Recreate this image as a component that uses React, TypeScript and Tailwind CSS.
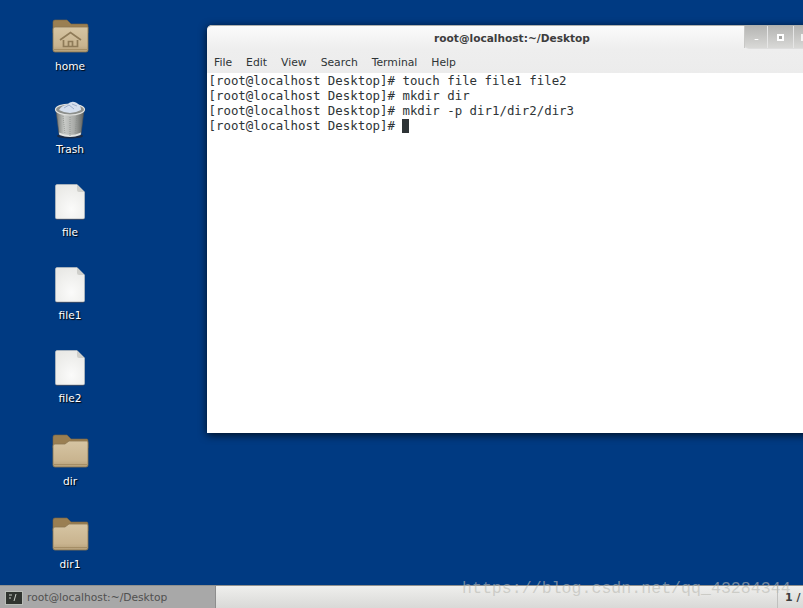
import { Minus } from "lucide-react";

function FolderIcon({ home }: { home?: boolean }) {
  return (
    <svg width="37" height="34" viewBox="0 0 37 34" className="block">
      <defs>
        <linearGradient id={home ? "fh" : "fd"} x1="0" y1="0" x2="0" y2="1">
          <stop offset="0" stopColor="#d6c5a3" />
          <stop offset="0.75" stopColor="#c9b48f" />
          <stop offset="1" stopColor="#b59f78" />
        </linearGradient>
      </defs>
      <path d="M1 3 Q1 1 3 1 H15 L19 5 H35 Q36 5 36 7 V14 H1 Z" fill="#9a7f52" stroke="#7e6740" strokeWidth="0.6" />
      <path
        d={home ? "M1 10 Q1 8 3 8 H36 V31 Q36 33 34 33 H3 Q1 33 1 31 Z" : "M1 12 Q1 10 3 10 H13 L17 7 H35 Q36 7 36 9 V31 Q36 33 34 33 H3 Q1 33 1 31 Z"}
        fill={`url(#${home ? "fh" : "fd"})`}
        stroke="#8b7650"
        strokeWidth="0.8"
      />
      <path d="M2 30.5 H35" stroke="#a58e66" strokeWidth="1.2" />
      {home && (
        <g fill="none" stroke="#8f7b58" strokeWidth="1.7">
          <path d="M8 21 L18.5 13.5 L29 21" />
          <path d="M11.5 21 V27.5 H25.5 V21" />
          <path d="M16.5 27.5 V22.5 H20.5 V27.5" />
        </g>
      )}
    </svg>
  );
}

function TrashIcon() {
  return (
    <svg width="34" height="40" viewBox="0 0 34 40" className="block">
      <defs>
        <linearGradient id="tb" x1="0" y1="0" x2="1" y2="0">
          <stop offset="0" stopColor="#70736f" />
          <stop offset="0.3" stopColor="#c9cbc8" />
          <stop offset="0.65" stopColor="#a9aba8" />
          <stop offset="1" stopColor="#5e615e" />
        </linearGradient>
      </defs>
      <ellipse cx="17" cy="37" rx="13" ry="2.6" fill="#1a2a45" />
      <path d="M3 11 L6 35 Q17 40 28 35 L31 11 Z" fill="url(#tb)" stroke="#555" strokeWidth="0.6" />
      <path d="M6 33.5 Q17 38.5 28 33.5 L27.6 36 Q17 40 6.4 36 Z" fill="#e4e5e3" />
      <ellipse cx="17" cy="10.5" rx="14.5" ry="5.5" fill="#8c8f8c" stroke="#e1e2e0" strokeWidth="1.2" />
      <path d="M6 11 Q9 6 14 6 Q18 1 23 3.5 Q28 6 28 11 Q17 17 6 11 Z" fill="#d5dfee" />
      <path d="M11 9 L16 6 L21 10 M19 5 L24 7" stroke="#9fb0cb" strokeWidth="1" fill="none" />
      <path d="M10 17 L12 35 M17 18 V37 M24 17 L22 35" stroke="#8d908d" strokeWidth="0.8" strokeDasharray="1 1" />
    </svg>
  );
}

function FileIcon() {
  return (
    <svg width="30" height="36" viewBox="0 0 30 36" className="block">
      <defs>
        <radialGradient id="fp" cx="0.55" cy="0.72" r="0.75">
          <stop offset="0" stopColor="#fbfbfa" />
          <stop offset="1" stopColor="#e9e9e6" />
        </radialGradient>
      </defs>
      <path d="M2 0.5 H22 L29.5 8 V33.5 Q29.5 35 28 35 H2 Q0.5 35 0.5 33.5 V2 Q0.5 0.5 2 0.5 Z" fill="url(#fp)" stroke="#c8c8c4" strokeWidth="0.6" />
      <path d="M22 0.5 L29.5 8 H24 Q22 8 22 6 Z" fill="#cfcfcb" />
      <path d="M1 35.4 H29" stroke="#2f3f5c" strokeWidth="0.8" />
    </svg>
  );
}

const icons = [
  { label: "home", icon: <FolderIcon home /> },
  { label: "Trash", icon: <TrashIcon /> },
  { label: "file", icon: <FileIcon /> },
  { label: "file1", icon: <FileIcon /> },
  { label: "file2", icon: <FileIcon /> },
  { label: "dir", icon: <FolderIcon /> },
  { label: "dir1", icon: <FolderIcon /> },
];

const lines = [
  "[root@localhost Desktop]# touch file file1 file2",
  "[root@localhost Desktop]# mkdir dir",
  "[root@localhost Desktop]# mkdir -p dir1/dir2/dir3",
];

const menu = ["File", "Edit", "View", "Search", "Terminal", "Help"];

export default function App() {
  return (
    <div className="relative flex h-[608px] w-[803px] flex-col overflow-hidden bg-[#003a82] font-['DejaVu_Sans',sans-serif]">
      {/* Desktop icons */}
      <div className="flex h-[585px] w-[140px] shrink-0 flex-col gap-[28px] pt-[18px]">
        {icons.map((item) => (
          <div key={item.label} className="flex h-[55px] shrink-0 flex-col items-center">
            <div className="flex h-[36px] items-center justify-center">{item.icon}</div>
            <span className="mt-[5px] text-[10.6px] leading-[14px] text-white [text-shadow:1px_1px_1px_#000]">
              {item.label}
            </span>
          </div>
        ))}
      </div>

      {/* Terminal window */}
      <div className="absolute left-[207px] top-[25px] h-[408px] w-[640px] rounded-t-[5px] bg-white shadow-[0_2px_8px_rgba(0,0,0,0.75)]">
        <div className="relative h-[48px] rounded-t-[5px] border-t border-[#aeb0ad] bg-gradient-to-b from-[#fbfbfb] via-[#eeeeee] to-[#ececec]">
          <div className="w-[610px] pt-[5px] text-center text-[10.6px] font-bold leading-[14px] text-[#3d3d3d]">
            root@localhost:~/Desktop
          </div>
          <div className="flex gap-[14px] pl-[7px] pt-[11px] text-[10.8px] leading-[14px] text-[#2e3436]">
            {menu.map((m) => (
              <span key={m}>{m}</span>
            ))}
          </div>
          {/* Window controls */}
          <div className="absolute left-[537px] top-0 flex h-[23px] rounded-bl-[5px] border-b border-[#dedede] bg-gradient-to-b from-[#b5b5b3] to-[#d9d9d7]">
            <div className="flex w-[23px] items-end justify-center border-l border-[#c8c8c6] pb-[6px]">
              <Minus className="h-[5px] w-[7px] text-white" strokeWidth={5} />
            </div>
            <div className="flex w-[26px] items-center justify-center border-l border-[#e6e6e6]">
              <div className="h-[7px] w-[7px] border-2 border-white bg-[#a5a5a3]" />
            </div>
            <div className="flex w-[30px] items-center border-l border-[#e6e6e6] pl-[7px]">
              <div className="h-[7px] w-[7px] bg-white/80" />
            </div>
          </div>
        </div>
        <div className="pl-[1.5px] font-['DejaVu_Sans_Mono',monospace] text-[12.4px] leading-[15px] text-[#2e3436]">
          {lines.map((l) => (
            <div key={l} className="whitespace-pre">
              {l}
            </div>
          ))}
          <div className="flex items-center whitespace-pre">
            [root@localhost Desktop]#{" "}
            <span className="h-[14px] w-[7px] bg-[#2e3436]" />
          </div>
        </div>
      </div>

      {/* Bottom panel */}
      <div className="flex h-[23px] shrink-0 items-stretch border-t border-[#8f908e] bg-gradient-to-b from-[#efefed] to-[#d9d9d7]">
        <div className="flex w-[216px] items-end gap-[4px] border-r border-[#8d8d8d] bg-[#a8a8a8] pb-[2px] pl-[5px]">
          <svg width="18" height="14" viewBox="0 0 18 14" className="mb-[1px] block">
            <rect x="0.5" y="0.5" width="17" height="13" fill="#30342f" stroke="#b9bdb7" />
            <path d="M4 4 H7 M4 7 H6 M9 10 L11 3" stroke="#c9cec6" strokeWidth="1" />
          </svg>
          <span className="text-[10.7px] leading-[16px] text-[#505050]">root@localhost:~/Desktop</span>
        </div>
        <div className="flex-1" />
        <div className="flex w-[26px] items-end whitespace-nowrap border-l border-[#c0c0be] pb-[2px] pl-[7px] text-[11px] font-bold leading-[16px] text-[#3d3d3d]">
          1 /
        </div>
      </div>

      {/* Watermark */}
      <div className="absolute left-[462px] top-[579px] whitespace-nowrap font-['Liberation_Mono',monospace] text-[16.6px] leading-[20px] text-[#b9b9b2]/60">
        https://blog.csdn.net/qq_43284344
      </div>
    </div>
  );
}
